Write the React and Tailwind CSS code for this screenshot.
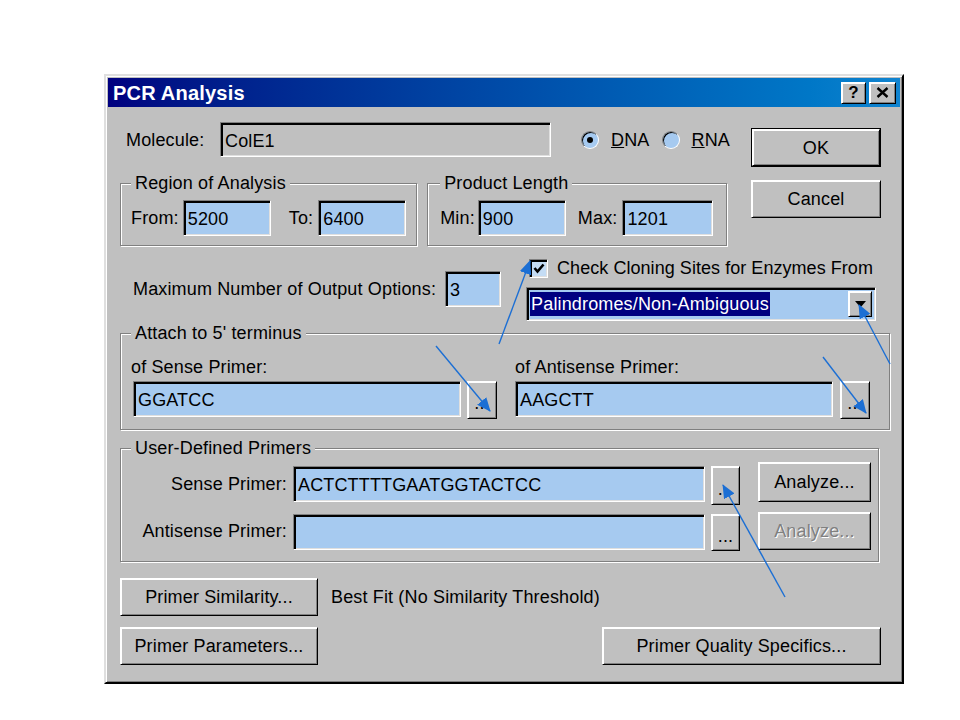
import React from 'react';

// win98-ish bevels
const raised =
  'bg-[#c0c0c0] border border-t-white border-l-white border-r-black border-b-black shadow-[inset_1px_1px_0_#fff,inset_-1px_-1px_0_#808080]';
const sunken =
  'border border-t-[#808080] border-l-[#808080] border-r-white border-b-white shadow-[inset_2px_2px_0_#000,inset_-1px_-1px_0_#dfdfdf]';
const etched = 'border border-[#808080] shadow-[1px_1px_0_#fff,inset_1px_1px_0_#fff]';

function Field({ className = '', gray = false, children }) {
  return (
    <div className={`${sunken} ${gray ? 'bg-[#c0c0c0]' : 'bg-[#a6caf0]'} flex items-center pl-[4px] pt-[2px] ${className}`}>
      {children}
    </div>
  );
}

function Btn({ className = '', children }) {
  return <div className={`${raised} flex items-center justify-center whitespace-nowrap ${className}`}>{children}</div>;
}

function Dots({ className = '' }) {
  return <Btn className={`pt-[6px] ${className}`}>...</Btn>;
}

function Group({ label, className = '', children }) {
  return (
    <fieldset className={`${etched} ${className}`}>
      <legend className="px-[4px] leading-[20px] bg-[#c0c0c0]">{label}</legend>
      {children}
    </fieldset>
  );
}

function Radio({ on }) {
  return (
    <span className="w-[18px] h-[18px] shrink-0 rounded-full bg-[#a6caf0] border border-t-[#808080] border-l-[#808080] border-r-white border-b-white shadow-[inset_1px_1px_0_#000] flex items-center justify-center">
      {on && <span className="w-[6px] h-[6px] rounded-full bg-black" />}
    </span>
  );
}

function Arrows() {
  const c = '#1c6fd4';
  const lines = [
    [499, 344, 530, 261],
    [436, 346, 490, 411],
    [823, 357, 866, 413],
    [890, 364, 859, 305],
    [785, 597, 723, 485],
  ];
  return (
    <svg className="absolute left-0 top-0 pointer-events-none" width="960" height="720" viewBox="0 0 960 720">
      <defs>
        <marker id="ah" markerWidth="14" markerHeight="12" refX="13" refY="6" orient="auto" markerUnits="userSpaceOnUse">
          <path d="M0,0 L14,6 L0,12 z" fill={c} />
        </marker>
      </defs>
      {lines.map(([x1, y1, x2, y2], i) => (
        <line key={i} x1={x1} y1={y1} x2={x2} y2={y2} stroke={c} strokeWidth="1.4" markerEnd="url(#ah)" />
      ))}
    </svg>
  );
}

export default function App() {
  return (
    <div className="relative w-[960px] h-[720px] bg-white overflow-hidden pt-[74px] pl-[104px] text-black text-[18px] leading-[20px] tracking-[0.15px] whitespace-nowrap font-['Liberation_Sans',Arial,sans-serif]">
      <div className="w-[800px] h-[610px] bg-[#c0c0c0] border-2 border-t-[#dfdfdf] border-l-[#dfdfdf] border-r-black border-b-black shadow-[inset_1px_1px_0_#fff,inset_-1px_-1px_0_#808080] p-[2px]">
        {/* title bar */}
        <div className="h-[29px] flex items-center justify-between bg-linear-to-r from-[#000080] to-[#1084d0] pl-[5px] pr-[4px]">
          <span className="text-white font-bold text-[20px] tracking-[0.2px]">PCR Analysis</span>
          <div className="flex gap-[3px]">
            <Btn className="w-[25px] h-[22px] font-bold text-[17px]">?</Btn>
            <Btn className="w-[27px] h-[22px]">
              <svg width="13" height="11" viewBox="0 0 13 11">
                <path d="M1.5 1 L11.5 10 M11.5 1 L1.5 10" stroke="#000" strokeWidth="2.4" />
              </svg>
            </Btn>
          </div>
        </div>

        <div className="pl-[12px]">
          {/* top section */}
          <div className="flex">
            <div className="w-[616px]">
              <div className="mt-[15px] flex items-center">
                <span className="ml-[6px] w-[94px]">Molecule:</span>
                <Field gray className="w-[331px] h-[35px]">ColE1</Field>
                <div className="ml-[30px] flex items-center">
                  <Radio on />
                  <span className="ml-[12px]"><u>D</u>NA</span>
                  <span className="ml-[13px]"><Radio /></span>
                  <span className="ml-[11px]"><u>R</u>NA</span>
                </div>
              </div>

              <div className="mt-[16px] flex">
                <Group label="Region of Analysis" className="w-[297px] px-[10px]">
                  <div className="pt-[7px] pb-[9px] flex items-center">
                    <span>From:</span>
                    <Field className="ml-[4px] w-[88px] h-[36px]">5200</Field>
                    <span className="ml-[18px]">To:</span>
                    <Field className="ml-[5px] w-[88px] h-[36px]">6400</Field>
                  </div>
                </Group>
                <Group label="Product Length" className="ml-[10px] w-[300px] px-[12px]">
                  <div className="pt-[7px] pb-[9px] flex items-center">
                    <span>Min:</span>
                    <Field className="ml-[3px] w-[88px] h-[36px]">900</Field>
                    <span className="ml-[12px]">Max:</span>
                    <Field className="ml-[5px] w-[91px] h-[36px]">1201</Field>
                  </div>
                </Group>
              </div>
            </div>

            <div className="ml-[15px] w-[130px]">
              <div className="mt-[21px] h-[39px] border border-black">
                <Btn className="w-full h-full">OK</Btn>
              </div>
              <Btn className="mt-[13px] h-[38px]">Cancel</Btn>
            </div>
          </div>

          {/* output options + cloning sites */}
          <div className="mt-[12px] flex items-start">
            <div className="ml-[13px] mt-[13px] flex items-center">
              <span>Maximum Number of Output Options:</span>
              <Field className="ml-[9px] w-[56px] h-[36px]">3</Field>
            </div>
            <div className="ml-[25px] w-[350px]">
              <div className="flex items-center h-[20px]">
                <span className={`${sunken} shrink-0 ml-[3px] w-[19px] h-[19px] bg-[#c4dcf4] flex items-center justify-center`}>
                  <svg width="12" height="11" viewBox="0 0 12 11">
                    <path d="M1.5 5 L4.5 8.5 L10.5 1.5" stroke="#000" strokeWidth="2.6" fill="none" />
                  </svg>
                </span>
                <span className="ml-[9px] tracking-[0.05px]">Check Cloning Sites for Enzymes From</span>
              </div>
              <div className={`${sunken} bg-[#a6caf0] mt-[9px] h-[34px] flex items-center pl-[3px] pr-[3px]`}>
                <span className="bg-[#000080] text-white px-[1px] leading-[24px]">Palindromes/Non-Ambiguous</span>
                <Btn className="ml-auto w-[24px] h-[26px]">
                  <svg width="11" height="7" viewBox="0 0 11 7">
                    <path d="M0 0 H11 L5.5 6.5 z" fill="#000" />
                  </svg>
                </Btn>
              </div>
            </div>
          </div>

          {/* attach to 5' terminus */}
          <Group label="Attach to 5' terminus" className="mt-[2px] w-[770px] pl-[10px] pr-[10px]">
            <div className="pt-[14px] pb-[10px] flex">
              <div>
                <div>of Sense Primer:</div>
                <div className="mt-[4px] flex items-start">
                  <Field className="ml-[2px] w-[328px] h-[36px]">GGATCC</Field>
                  <Dots className="ml-[6px] w-[30px] h-[38px]" />
                </div>
              </div>
              <div className="ml-[18px]">
                <div>of Antisense Primer:</div>
                <div className="mt-[4px] flex items-start">
                  <Field className="w-[318px] h-[36px]">AAGCTT</Field>
                  <Dots className="ml-[7px] w-[30px] h-[38px]" />
                </div>
              </div>
            </div>
          </Group>

          {/* user-defined primers */}
          <Group label="User-Defined Primers" className="mt-[8px] w-[759px] pl-[10px] pr-[7px]">
            <div className="pt-[4px] pb-[10px]">
              <div className="flex items-start">
                <span className="mt-[12px] w-[156px] text-right">Sense Primer:</span>
                <Field className="mt-[4px] ml-[6px] w-[412px] h-[36px]">ACTCTTTTGAATGGTACTCC</Field>
                <Dots className="mt-[4px] ml-[6px] w-[29px] h-[39px]" />
                <Btn className="ml-[18px] w-[113px] h-[40px]">Analyze...</Btn>
              </div>
              <div className="mt-[6px] flex items-start">
                <span className="mt-[10px] w-[156px] text-right">Antisense Primer:</span>
                <Field className="mt-[3px] ml-[6px] w-[412px] h-[36px]" />
                <Dots className="mt-[3px] ml-[6px] w-[29px] h-[37px]" />
                <Btn className="mt-[1px] ml-[18px] w-[113px] h-[38px] text-[#808080] [text-shadow:1px_1px_0_#fff]">
                  Analyze...
                </Btn>
              </div>
            </div>
          </Group>

          {/* bottom buttons */}
          <div className="mt-[16px] flex items-center">
            <Btn className="w-[198px] h-[38px]">Primer Similarity...</Btn>
            <span className="ml-[13px]">Best Fit (No Similarity Threshold)</span>
          </div>
          <div className="mt-[11px] w-[761px] flex justify-between">
            <Btn className="w-[198px] h-[38px]">Primer Parameters...</Btn>
            <Btn className="w-[279px] h-[38px]">Primer Quality Specifics...</Btn>
          </div>
        </div>
      </div>
      <Arrows />
    </div>
  );
}
